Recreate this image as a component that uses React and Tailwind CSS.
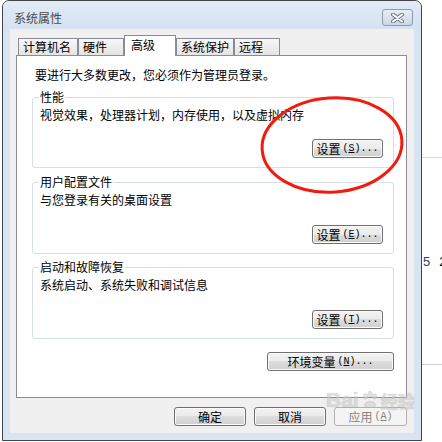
import React from "react";

const TABS = [
  { id: "name", label: "计算机名", w: "w-[60px]" },
  { id: "hw", label: "硬件", w: "w-[46px]" },
  { id: "adv", label: "高级", w: "w-[52px]", active: true },
  { id: "prot", label: "系统保护", w: "w-[58px]" },
  { id: "remote", label: "远程", w: "w-[46px]" },
];

const GROUPS = [
  { title: "性能", desc: "视觉效果，处理器计划，内存使用，以及虚拟内存", hot: "S", mt: "mt-[6px]", btnMt: "mt-[16px]" },
  { title: "用户配置文件", desc: "与您登录有关的桌面设置", hot: "E", mt: "mt-[6px]", btnMt: "mt-[17px]" },
  { title: "启动和故障恢复", desc: "系统启动、系统失败和调试信息", hot: "T", mt: "mt-[5px]", btnMt: "mt-[17px]" },
];

function WinButton({ label, hot, width = "w-[71px]", disabled = false, dots = true }) {
  return (
    <button
      className={`${width} h-[19px] shrink-0 rounded-[3px] border flex items-center justify-center leading-[16px] text-[12px] ${
        disabled
          ? "border-[#adb2b5] bg-[#f4f4f4] text-[#838383]"
          : "border-[#707070] text-black bg-[linear-gradient(#f2f2f2_0%,#ebebeb_50%,#dddddd_50%,#cfcfcf_100%)] shadow-[inset_0_0_0_1px_#fbfbfb]"
      }`}
    >
      <span>{label}</span>
      {hot && (
        <span className="font-['Liberation_Mono',monospace] text-[10px] ml-[2px]">
          (<u>{hot}</u>){dots ? "..." : ""}
        </span>
      )}
    </button>
  );
}

function CloseX() {
  return (
    <svg width="13" height="10" viewBox="0 0 13 10">
      <path d="M2 1.5 L11 8.5 M11 1.5 L2 8.5" stroke="#6d7a8a" strokeWidth="4" strokeLinecap="round" />
      <path d="M2 1.5 L11 8.5 M11 1.5 L2 8.5" stroke="#ffffff" strokeWidth="2" strokeLinecap="round" />
    </svg>
  );
}

export default function App() {
  return (
    <div className="w-[442px] h-[442px] bg-white relative overflow-hidden flex font-['Noto_Sans_CJK_SC','Noto_Sans',sans-serif] text-[12px] text-black">
      {/* dialog window */}
      <div className="ml-[2px] w-[420px] h-[441px] shrink-0 border border-[#42464b] rounded-t-[7px] bg-[#d7e4f2] flex flex-col">
        <div className="h-[28px] flex items-start justify-between pl-[11px] pr-[8px] pt-[8px] rounded-t-[6px] bg-[linear-gradient(#e2ebf6,#d5e2f1)]">
          <span className="leading-[16px] mt-[1px] text-[#4a4a4a]">系统属性</span>
          <div className="w-[31px] h-[17px] rounded-[3px] border border-[#8d9cb0] bg-[linear-gradient(#e6edf5,#cdd8e6)] flex items-center justify-center">
            <CloseX />
          </div>
        </div>

        <div className="mx-[7px] h-[404px] bg-[#f0f0f0] pl-[6px] pr-[7px] pt-[6px] flex flex-col">
          <div className="h-[20px] flex items-end pl-[2px]">
            {TABS.map((t) =>
              t.active ? (
                <div
                  key={t.id}
                  className={`${t.w} h-[21px] -mb-px relative z-10 bg-white border-t border-x border-[#898c95] pl-[6px] pt-[1px] leading-[16px]`}
                >
                  {t.label}
                </div>
              ) : (
                <div
                  key={t.id}
                  className={`${t.w} h-[17px] border-t border-x border-[#898c95] bg-[linear-gradient(#f7f7f7,#e4e4e4)] pl-[4px] leading-[16px]`}
                >
                  {t.label}
                </div>
              )
            )}
          </div>

          <div className="h-[343px] bg-white border border-[#898c95] flex flex-col pt-[11px]">
            <p className="pl-[18px] leading-[16px]">要进行大多数更改，您必须作为管理员登录。</p>

            {GROUPS.map((g) => (
              <fieldset key={g.title} className={`${g.mt} ml-[15px] mr-[12px] border border-[#d5dfe5] rounded-[3px]`}>
                <legend className="ml-[6px] px-[1px] leading-[16px]">{g.title}</legend>
                <p className="mt-[2px] pl-[7px] leading-[16px]">{g.desc}</p>
                <div className={`${g.btnMt} flex justify-end pr-[10px] pb-[9px]`}>
                  <WinButton label="设置" hot={g.hot} />
                </div>
              </fieldset>
            ))}

            <div className="mt-[13px] mr-[12px] flex justify-end">
              <WinButton label="环境变量" hot="N" width="w-[127px]" />
            </div>
          </div>

          <div className="mt-[9px] flex justify-end gap-[8px]">
            <WinButton label="确定" width="w-[72px]" />
            <WinButton label="取消" width="w-[72px]" />
            <WinButton label="应用" hot="A" width="w-[73px]" disabled dots={false} />
          </div>
        </div>
      </div>

      {/* background page peeking out on the right */}
      <div className="flex-1 flex flex-col">
        <div className="h-[157px]" />
        <div className="border-t border-[#d6d6d6]" />
        <div className="mt-[96px] pl-[1px] flex gap-[9px] text-[13px] leading-[16px] font-['Liberation_Sans',sans-serif]">
          <span className="text-[#33425a]">5</span>
          <span>2</span>
        </div>
        <div className="mt-[94px] border-t border-[#cfcfcf]" />
      </div>

      {/* red marker drawn over the screenshot */}
      <svg className="absolute inset-0 pointer-events-none" width="442" height="442" viewBox="0 0 442 442">
        <ellipse cx="332" cy="145" rx="70" ry="47" fill="none" stroke="#f21b0f" strokeWidth="3" transform="rotate(-4 332 145)" />
      </svg>

      {/* faint watermark */}
      <div className="absolute left-[326px] top-[389px] flex items-end pointer-events-none opacity-60 text-[#c9c9c9] font-['Liberation_Sans',sans-serif] font-bold text-[21px] leading-[21px] [text-shadow:0_0_1px_#9a9a9a]">
        <span>Bai</span>
        <svg width="20" height="20" viewBox="0 0 22 22" className="mx-[1px]">
          <g fill="#cfcfcf" stroke="#a9a9a9" strokeWidth="0.6">
            <ellipse cx="6" cy="7" rx="2.4" ry="3" />
            <ellipse cx="11" cy="4.5" rx="2.4" ry="3" />
            <ellipse cx="16" cy="7" rx="2.4" ry="3" />
            <path d="M5 17 C5 11 17 11 17 17 C17 20 5 20 5 17 Z" />
          </g>
        </svg>
        <span className="text-[17px] leading-[19px] font-['Noto_Sans_CJK_SC',sans-serif]">经验</span>
      </div>
    </div>
  );
}
